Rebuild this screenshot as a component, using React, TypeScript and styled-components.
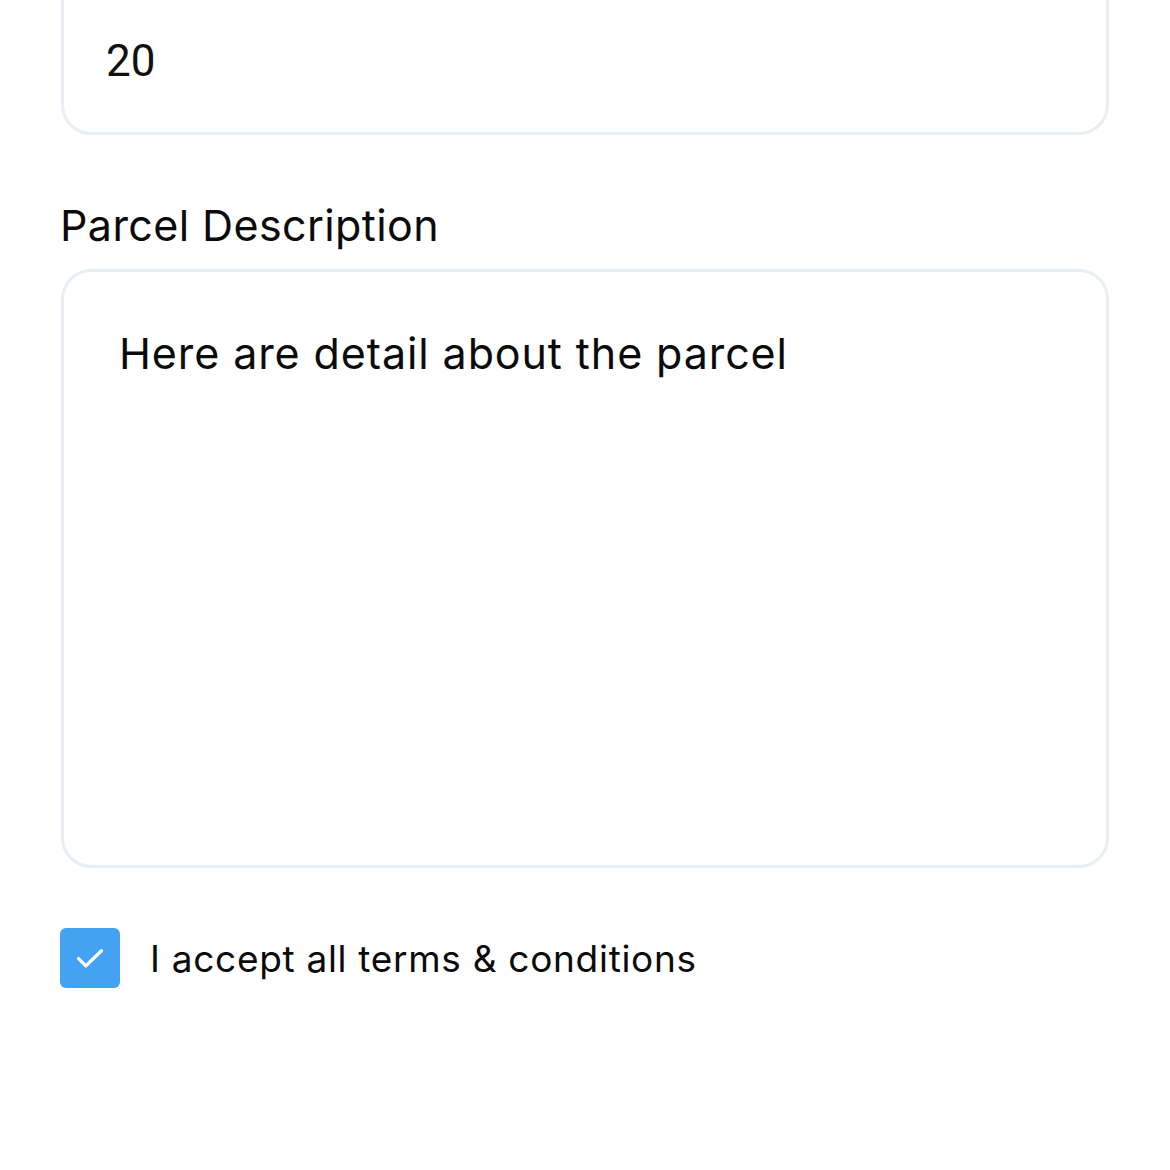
import React from "react";
import styled, { createGlobalStyle } from "styled-components";

const Global = createGlobalStyle`
  html, body { margin: 0; padding: 0; background: #ffffff; }
  body { font-family: "Inter", "Noto Sans", sans-serif; color: #0b0b0b; }
`;

const Page = styled.div`
  width: 1170px;
  height: 1170px;
  overflow: hidden;
  box-sizing: border-box;
  padding: 0 61px 0 60px;
  display: flex;
  flex-direction: column;
`;

const InputBox = styled.div`
  margin-top: -30px;
  height: 165px;
  box-sizing: border-box;
  border: 3px solid #e9edf4;
  border-radius: 30px;
  display: flex;
  align-items: center;
  padding: 16px 0 0 42px;
  margin-left: 1px;
  font-family: "Roboto", "Inter", sans-serif;
  font-size: 44px;
  color: #111;
`;

const Label = styled.div`
  margin-top: 65px;
  font-size: 43px;
  letter-spacing: 0.4px;
  line-height: 50px;
  color: #0b0b0b;
`;

const TextArea = styled.div`
  margin-top: 19px;
  margin-left: 1px;
  height: 599px;
  box-sizing: border-box;
  border: 3px solid #e9edf4;
  border-radius: 30px;
  padding: 56px 0 0 55px;
  font-size: 43px;
  letter-spacing: 0.9px;
  line-height: 50px;
  color: #0b0b0b;
`;

const CheckRow = styled.label`
  margin-top: 60px;
  display: flex;
  align-items: center;
  gap: 30px;
  font-size: 37px;
  letter-spacing: 0.7px;
  color: #0b0b0b;
`;

const Box = styled.span`
  width: 60px;
  height: 60px;
  border-radius: 6px;
  background: #45a1f2;
  display: flex;
  align-items: center;
  justify-content: center;
`;

export default function App() {
  return (
    <>
      <Global />
      <Page>
        <InputBox>20</InputBox>
        <Label>Parcel Description</Label>
        <TextArea>Here are detail about the parcel</TextArea>
        <CheckRow>
          <Box>
            <svg width="38" height="38" viewBox="0 0 24 24" fill="none" stroke="#fff" strokeWidth="2.1" strokeLinecap="round" strokeLinejoin="round">
              <path d="M4.8 12.4l4.6 4.6L19.2 7.4" />
            </svg>
          </Box>
          <span>I accept all terms &amp; conditions</span>
        </CheckRow>
      </Page>
    </>
  );
}
